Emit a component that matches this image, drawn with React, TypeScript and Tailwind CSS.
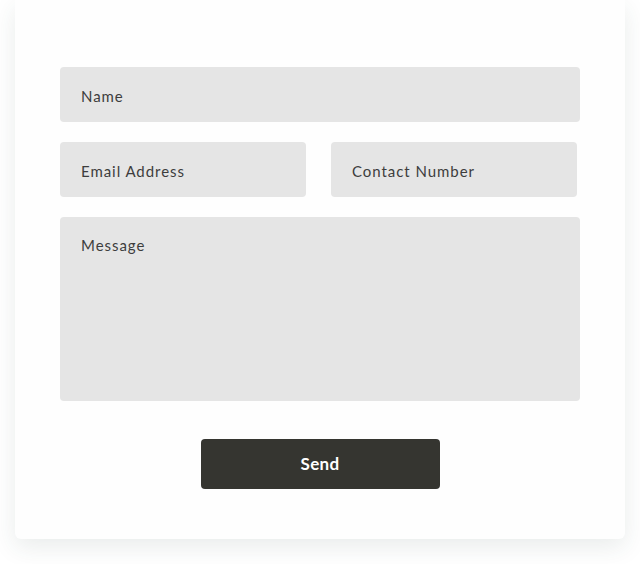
export default function App() {
  const field =
    "h-[55px] rounded-[4px] bg-[#e5e5e5] pl-[21px] pt-[4px] flex items-center text-[15px] tracking-[0.95px] text-[#3d3d3d]";
  return (
    <div className="w-[640px] h-[564px] bg-white" style={{ fontFamily: "Lato, 'Open Sans', sans-serif" }}>
      <div className="mx-[15px] h-[539px] rounded-b-[6px] bg-[#fefefe] shadow-[0_8px_24px_rgba(40,70,60,0.10)] pt-[67px] px-[45px]">
        <div className="flex flex-col gap-[20px]">
          <div className={field}>Name</div>
          <div className="flex gap-[25px]">
            <div className={field + " w-[246px]"}>Email Address</div>
            <div className={field + " w-[246px]"}>Contact Number</div>
          </div>
          <div className="h-[184px] rounded-[4px] bg-[#e5e5e5] pl-[21px] pt-[17px] text-[15px] tracking-[0.95px] text-[#3d3d3d]">
            Message
          </div>
        </div>
        <div className="flex justify-center mt-[38px]">
          <button className="w-[239px] h-[50px] rounded-[4px] bg-[#353530] text-white text-[17px] font-bold tracking-[0.3px]">
            Send
          </button>
        </div>
      </div>
    </div>
  );
}
